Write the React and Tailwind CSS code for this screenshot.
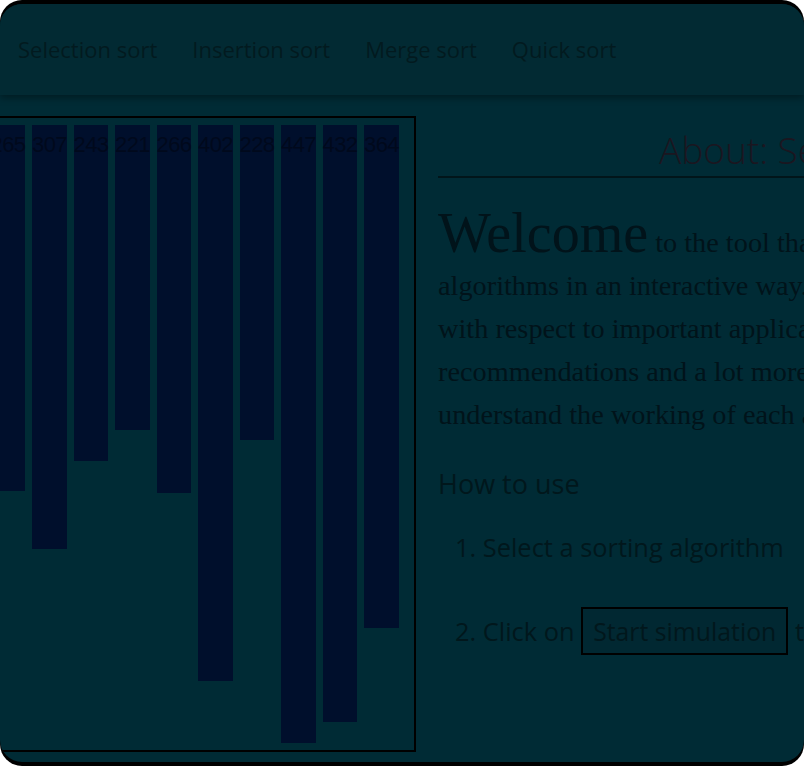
const NAV = ["Selection sort", "Insertion sort", "Merge sort", "Quick sort"];
const VALUES = [265, 307, 243, 221, 266, 402, 228, 447, 432, 364];

function Bar({ value }) {
  return (
    <div
      className="w-[34.5px] shrink-0 bg-[#000f2c] text-center"
      style={{ height: `${Math.round(value * 1.382)}px` }}
    >
      <div className="pt-[7px] font-['Liberation_Sans',Arial,sans-serif] text-[22px] leading-[normal] text-[#00091c] tracking-[-0.6px] whitespace-nowrap">
        {value}
      </div>
    </div>
  );
}

export default function App() {
  return (
    <div className="h-[767px] w-[804px] overflow-hidden bg-white">
      <div className="h-[766px] rounded-[22px] bg-black pt-[4px] pb-[4px]">
        <div className="flex h-full flex-col overflow-hidden rounded-[22px] bg-[#002b35] font-['Open_Sans',sans-serif] text-[#01171c]">
          <header className="relative z-10 flex h-[91px] shrink-0 items-center gap-[35px] bg-[#022a33] pl-[18px] shadow-[0_3px_7px_rgba(0,0,0,0.35)]">
            {NAV.map((item) => (
              <span key={item} className="whitespace-nowrap text-[22px] text-[#021a1f]">
                {item}
              </span>
            ))}
          </header>

          <main className="flex flex-1 items-start pt-[21px]">
            <div className="-ml-[20px] flex h-[636px] w-[436px] shrink-0 items-start gap-[7px] border-2 border-black pt-[7px] pl-[8.5px]">
              {VALUES.map((v, i) => (
                <Bar key={i} value={v} />
              ))}
            </div>

            <section className="ml-[22px] shrink-0 pt-[9px]">
              <h1 className="w-[800px] whitespace-nowrap border-b-2 border-[#01151a] pl-[221px] pb-[1px] text-[37px] font-light leading-[50px] text-[#1b1620]">
                About: Selection sort
              </h1>

              <p className="mt-[34px] whitespace-nowrap font-['Liberation_Serif','Times_New_Roman',serif] text-[28.3px] leading-[43px] text-[#01131a]">
                <span className="text-[56px]">Welcome</span> to the tool that lets you visualize sorting
                <br />
                algorithms in an interactive way. Compare the algorithms
                <br />
                with respect to important applications, get
                <br />
                recommendations and a lot more. Step through to
                <br />
                understand the working of each algorithm.
              </p>

              <h2 className="mt-[30px] text-[27px] leading-[36px]">How to use</h2>

              <ol className="mt-[27px] whitespace-nowrap pl-[17px] text-[25.4px] leading-[36px]">
                <li>1. Select a sorting algorithm</li>
                <li className="mt-[42px]">
                  2. Click on{" "}
                  <span className="inline-block border-2 border-black bg-[#012832] px-[10px] py-[4px] text-[24.8px] leading-[36px]">
                    Start simulation
                  </span>{" "}
                  to watch it run
                </li>
              </ol>
            </section>
          </main>
        </div>
      </div>
    </div>
  );
}
